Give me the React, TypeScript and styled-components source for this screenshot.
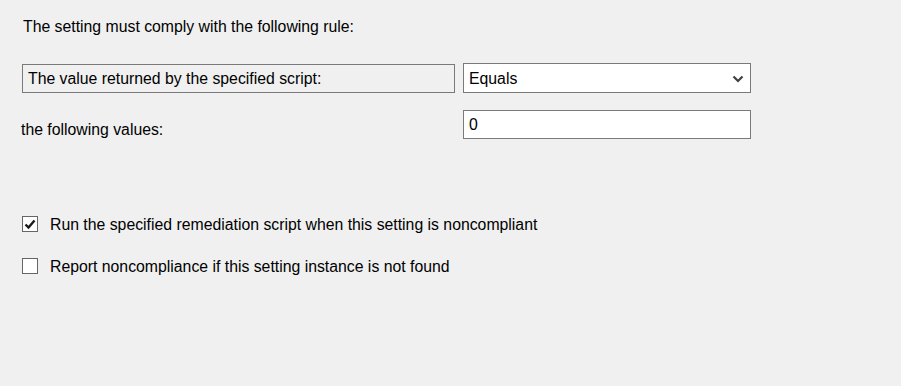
import React from 'react';
import styled, {createGlobalStyle} from "styled-components";

const GlobalStyle = createGlobalStyle`
  html, body {
    margin: 0;
    padding: 0;
    background: #f0f0f0;
  }
  body {
    font-family: "Liberation Sans", Arial, sans-serif;
    color: #000;
  }
`

function App() {
    return (
        <Page>
            <GlobalStyle/>
            <Title>The setting must comply with the following rule:</Title>
            <FormGrid>
                <LabelBox>The value returned by the specified script:</LabelBox>
                <Combo>
                    <span>Equals</span>
                    <svg width="12" height="8" viewBox="0 0 12 8">
                        <path d="M1.5 1.5 L6 6 L10.5 1.5" fill="none" stroke="#404040" strokeWidth="2.2"/>
                    </svg>
                </Combo>
                <PlainLabel>the following values:</PlainLabel>
                <TextBox>0</TextBox>
            </FormGrid>
            <Checks>
                <CheckRow>
                    <CheckBox>
                        <svg width="12" height="11" viewBox="0 0 12 11">
                            <path d="M1.5 5.5 L4.5 8.5 L10.5 1.5" fill="none" stroke="#1a1a1a" strokeWidth="2.4"/>
                        </svg>
                    </CheckBox>
                    <CheckText>Run the specified remediation script when this setting is noncompliant</CheckText>
                </CheckRow>
                <CheckRow>
                    <CheckBox/>
                    <CheckText>Report noncompliance if this setting instance is not found</CheckText>
                </CheckRow>
            </Checks>
        </Page>
    );
}

export default App;

const Page = styled.div`
  width: 901px;
  height: 386px;
  padding: 17px 0 0 22px;
  box-sizing: border-box;
  font-size: 15.8px;
`

const Title = styled.div`
  line-height: 19px;
  margin-left: 1px;
`

const FormGrid = styled.div`
  display: grid;
  grid-template-columns: 433px 288px;
  column-gap: 8px;
  row-gap: 17px;
  margin-top: 27px;
  align-items: center;
`

const LabelBox = styled.div`
  height: 29px;
  box-sizing: border-box;
  border: 1px solid #7a7a7a;
  padding: 1px 0 0 5px;
  display: flex;
  align-items: center;
`

const Combo = styled.div`
  height: 30px;
  box-sizing: border-box;
  border: 1px solid #7a7a7a;
  background: #fff;
  display: flex;
  align-items: center;
  justify-content: space-between;
  padding: 1px 6px 0 5px;
`

const PlainLabel = styled.div`
  margin-left: -1px;
  padding-top: 10px;
`

const TextBox = styled.div`
  height: 29px;
  box-sizing: border-box;
  border: 1px solid #7a7a7a;
  background: #fff;
  display: flex;
  align-items: center;
  padding: 1px 0 0 5px;
`

const Checks = styled.div`
  display: flex;
  flex-direction: column;
  gap: 23px;
  margin-top: 76px;
`

const CheckRow = styled.div`
  display: flex;
  align-items: flex-start;
  gap: 12px;
`

const CheckBox = styled.div`
  width: 16px;
  height: 16px;
  margin-top: 1px;
  flex-shrink: 0;
  box-sizing: border-box;
  border: 1px solid #666;
  background: #fff;
  display: flex;
  align-items: center;
  justify-content: center;
`

const CheckText = styled.div`
  line-height: 18px;
  padding-top: 1px;
`
